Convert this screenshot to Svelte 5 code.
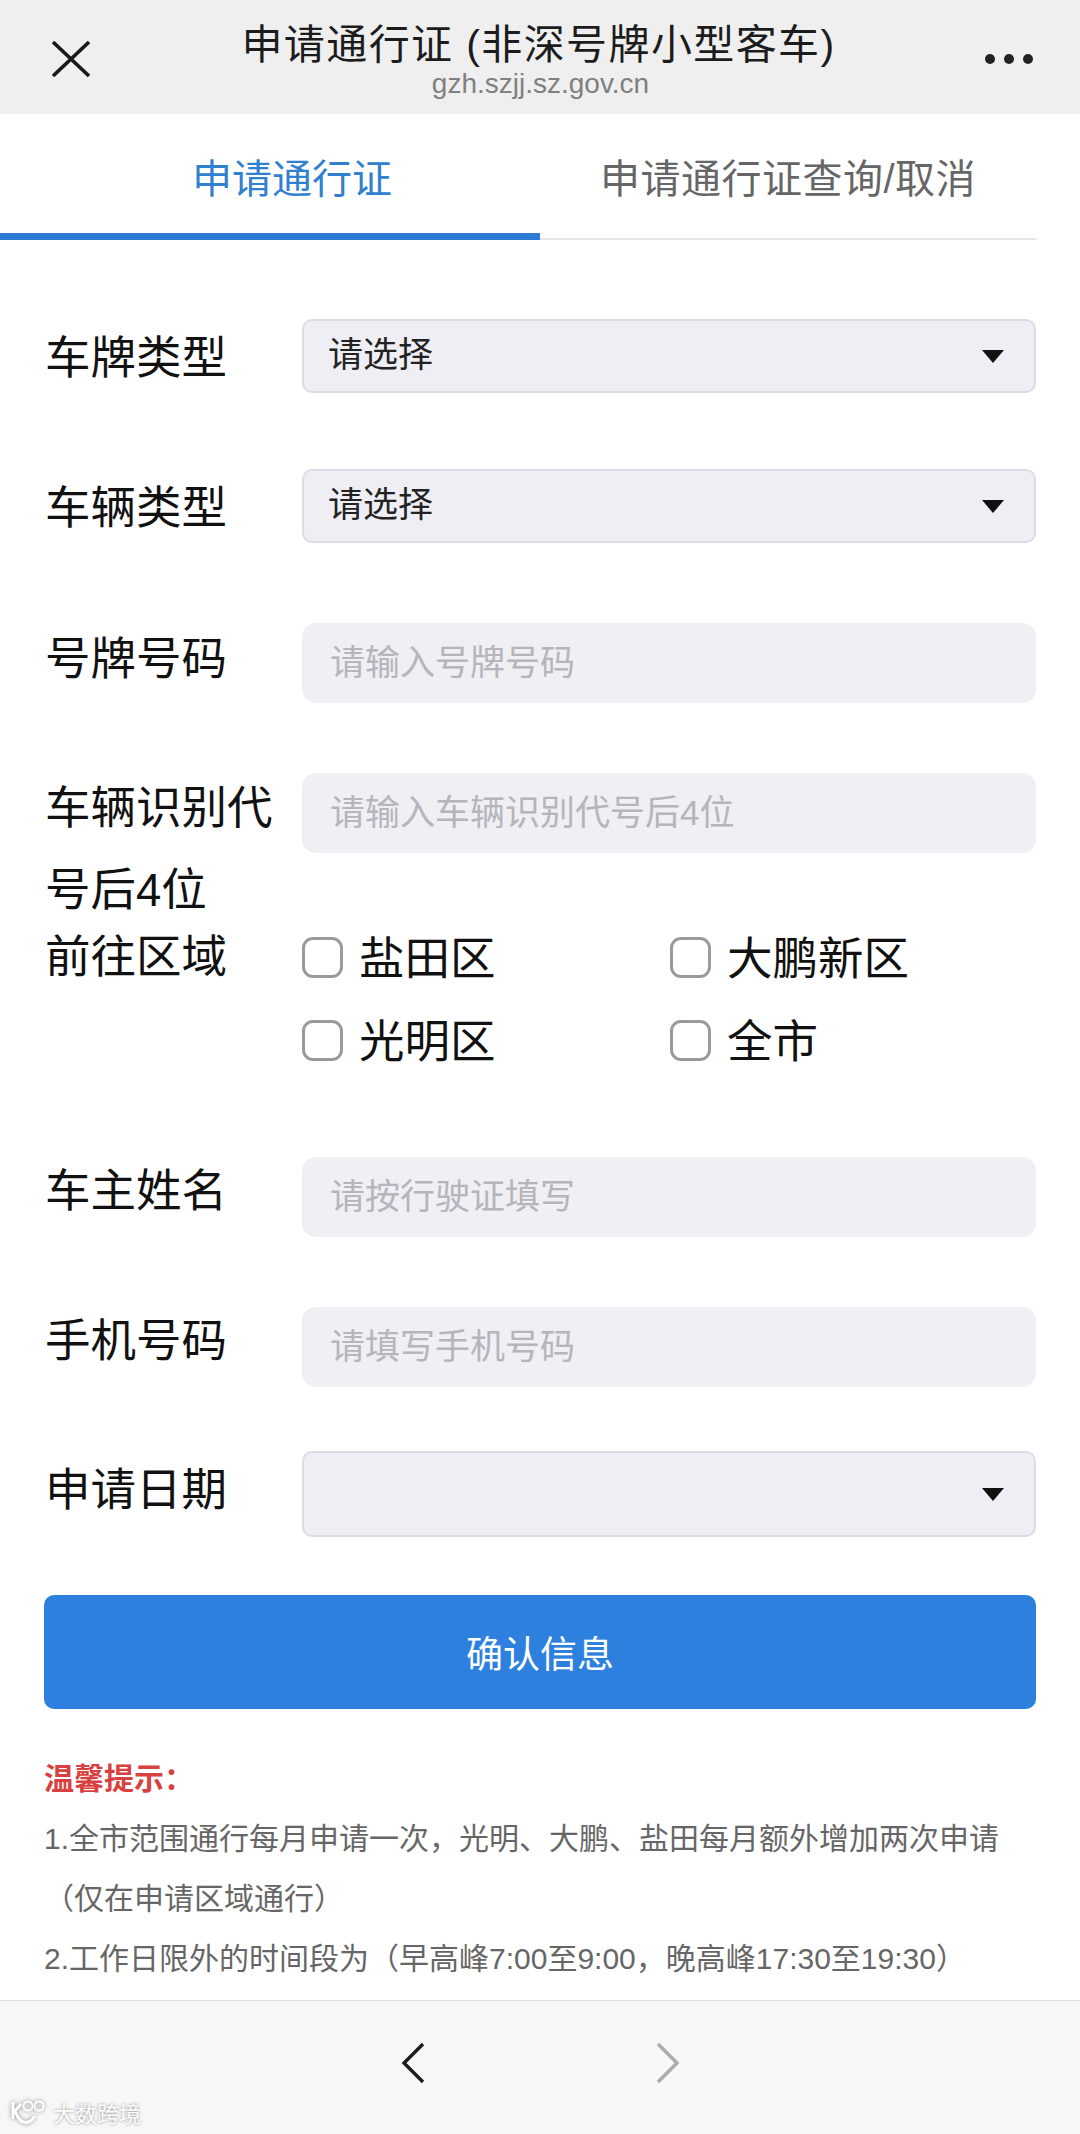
<script>
  const inputs = {
    plate: "请输入号牌号码",
    vin: "请输入车辆识别代号后4位",
    owner: "请按行驶证填写",
    phone: "请填写手机号码",
  };
  const areas = ["盐田区", "大鹏新区", "光明区", "全市"];
</script>

<div class="page">
  <header class="topbar">
    <svg class="close" viewBox="0 0 38 36" width="38" height="36">
      <path d="M1 1 L37 35 M37 1 L1 35" fill="none" stroke="#1a1a1a" stroke-width="3.6" />
    </svg>
    <div class="heading">
      <div class="title">申请通行证 (非深号牌小型客车)</div>
      <div class="url">gzh.szjj.sz.gov.cn</div>
    </div>
    <div class="dots"><i></i><i></i><i></i></div>
  </header>

  <nav class="tabs">
    <div class="tab active">申请通行证</div>
    <div class="tab">申请通行证查询/取消</div>
  </nav>

  <main class="form">
    <div class="row first">
      <span class="label">车牌类型</span>
      <div class="select">
        <select><option>请选择</option></select>
        <span class="arrow"></span>
      </div>
    </div>
    <div class="row second">
      <span class="label">车辆类型</span>
      <div class="select">
        <select><option>请选择</option></select>
        <span class="arrow"></span>
      </div>
    </div>
    <div class="row third">
      <span class="label">号牌号码</span>
      <input type="text" placeholder={inputs.plate} />
    </div>
    <div class="row vin">
      <span class="label">车辆识别代号后4位</span>
      <input type="text" placeholder={inputs.vin} />
    </div>
    <div class="row areas">
      <span class="label">前往区域</span>
      <div class="area-grid">
        {#each areas as area}
          <label class="area"><span class="box"></span>{area}</label>
        {/each}
      </div>
    </div>
    <div class="row owner">
      <span class="label">车主姓名</span>
      <input type="text" placeholder={inputs.owner} />
    </div>
    <div class="row phone">
      <span class="label">手机号码</span>
      <input type="text" placeholder={inputs.phone} />
    </div>
    <div class="row date">
      <span class="label">申请日期</span>
      <div class="select tall">
        <select><option></option></select>
        <span class="arrow"></span>
      </div>
    </div>

    <button class="confirm" type="button">确认信息</button>

    <section class="notice">
      <h4>温馨提示：</h4>
      <p>1.全市范围通行每月申请一次，光明、大鹏、盐田每月额外增加两次申请（仅在申请区域通行）</p>
      <p>2.工作日限外的时间段为（早高峰7:00至9:00，晚高峰17:30至19:30）</p>
    </section>
  </main>

  <footer class="toolbar">
    <svg viewBox="0 0 24 42" width="24" height="42">
      <path d="M22 2 L3 21 L22 40" fill="none" stroke="#1c1c1c" stroke-width="3.4" />
    </svg>
    <svg viewBox="0 0 24 42" width="24" height="42">
      <path d="M2 2 L21 21 L2 40" fill="none" stroke="#ababab" stroke-width="3.4" />
    </svg>
  </footer>

  <div class="watermark">
    <svg viewBox="0 0 40 26" width="40" height="26">
      <g fill="none" stroke="#fff" stroke-width="2">
        <path d="M3 3 V20 M11 5 L5 12 C8 20 12 25 18 23 C22 22 24 19 24 17" stroke-width="3" />
        <circle cx="18" cy="7" r="4.5" />
        <circle cx="29" cy="7" r="4.5" />
      </g>
    </svg>
    <span>大数跨境</span>
  </div>
</div>

<style>
  :global(body) {
    margin: 0;
    background: #fff;
  }

  .page {
    position: relative;
    display: flex;
    flex-direction: column;
    width: 1080px;
    height: 2134px;
    overflow: hidden;
    font-family: "Liberation Sans", "Noto Sans CJK SC", sans-serif;
    color: #111;
  }

  .topbar {
    display: flex;
    align-items: flex-start;
    justify-content: space-between;
    box-sizing: border-box;
    height: 114px;
    padding: 0 47px 0 52px;
    background: #efefef;
  }

  .close {
    margin-top: 41px;
  }

  .heading {
    flex: 1;
    padding: 21px 16px 0 0;
    text-align: center;
  }

  .title {
    margin-right: -18px;
    font-size: 41px;
    line-height: 48px;
    letter-spacing: 1.4px;
    white-space: nowrap;
    color: #1c1c1c;
  }

  .url {
    margin-right: -22px;
    font-size: 28px;
    line-height: 30px;
    color: #808080;
  }

  .dots {
    display: flex;
    gap: 9px;
    margin-top: 54px;
  }

  .dots i {
    width: 10px;
    height: 10px;
    border-radius: 50%;
    background: #222;
  }

  .tabs {
    display: flex;
    box-sizing: border-box;
    height: 126px;
    width: 1036px;
    border-bottom: 2px solid #e6e6ea;
  }

  .tab {
    flex: 1;
    padding-top: 39px;
    font-size: 40px;
    line-height: 52px;
    letter-spacing: 0.5px;
    text-align: center;
    color: #666;
  }

  .tab.active {
    flex: none;
    box-sizing: border-box;
    width: 540px;
    height: 126px;
    padding-left: 44px;
    letter-spacing: 0;
    color: #3180d0;
    border-bottom: 7px solid #2e7bd6;
  }

  .form {
    flex: 1;
    padding: 0 44px 0 46px;
  }

  .row {
    display: grid;
    grid-template-columns: 256px 1fr;
    align-items: center;
  }

  .first { margin-top: 79px; }
  .second { margin-top: 76px; }
  .third { margin-top: 80px; }
  .owner { margin-top: 90px; }
  .phone { margin-top: 70px; }
  .date { margin-top: 64px; }

  .vin {
    align-items: start;
    margin-top: 70px;
  }

  .areas {
    align-items: start;
  }

  .label {
    margin-left: -1px;
    font-size: 45.5px;
    line-height: 58px;
    color: #111;
  }

  .first .label,
  .second .label {
    margin-top: 6px;
  }

  .third .label,
  .date .label {
    margin-bottom: 6px;
  }

  .owner .label,
  .phone .label {
    margin-bottom: 10px;
  }

  .vin .label {
    margin-top: -5px;
    line-height: 82px;
    width: 240px;
  }

  .areas .label {
    margin-top: -3px;
  }

  .select {
    position: relative;
    height: 74px;
  }

  .select.tall {
    height: 86px;
  }

  select {
    appearance: none;
    box-sizing: border-box;
    display: block;
    width: 100%;
    height: 100%;
    padding: 0 0 4px 24px;
    border: 2px solid #dcdce6;
    border-radius: 10px;
    background: #eeeef4;
    font: inherit;
    font-size: 35px;
    color: #222;
  }

  .arrow {
    position: absolute;
    top: 50%;
    right: 32px;
    margin-top: -6px;
    border-left: 11px solid transparent;
    border-right: 11px solid transparent;
    border-top: 13px solid #111;
  }

  input {
    box-sizing: border-box;
    display: block;
    width: 100%;
    height: 80px;
    padding: 0 28px;
    border: 0;
    border-radius: 14px;
    background: #efeff4;
    font: inherit;
    font-size: 35px;
  }

  input::placeholder {
    color: #b5b5bb;
    opacity: 1;
  }

  .area-grid {
    display: grid;
    grid-template-columns: 368px 1fr;
    row-gap: 25px;
    margin-top: -6px;
  }

  .area {
    display: flex;
    align-items: center;
    gap: 16px;
    height: 58px;
    font-size: 45.5px;
    color: #111;
  }

  .box {
    box-sizing: border-box;
    width: 41px;
    height: 41px;
    margin-top: 4px;
    border: 3px solid #9a9a9a;
    border-radius: 11px;
  }

  .confirm {
    display: block;
    width: 992px;
    height: 114px;
    margin: 58px 0 0 -2px;
    border: 0;
    border-radius: 10px;
    background: #2e80de;
    font: inherit;
    font-size: 37px;
    color: #fff;
  }

  .notice {
    margin: 40px 0 0 -2px;
  }

  .notice h4 {
    margin: 0;
    font-size: 30px;
    line-height: 60px;
    font-weight: 700;
    color: #d94141;
  }

  .notice p {
    margin: 0;
    font-size: 30px;
    line-height: 60px;
    color: #666;
  }

  .toolbar {
    display: flex;
    justify-content: center;
    gap: 231px;
    box-sizing: border-box;
    height: 134px;
    padding-top: 41px;
    background: #f7f7f7;
    border-top: 1px solid #dedede;
  }

  .watermark {
    position: absolute;
    left: 10px;
    bottom: 6px;
    display: flex;
    align-items: center;
    gap: 3px;
    font-size: 22px;
    color: #fff;
    text-shadow: 0 0 3px #888;
  }

  .watermark svg {
    filter: drop-shadow(0 0 2px #888);
  }
</style>
